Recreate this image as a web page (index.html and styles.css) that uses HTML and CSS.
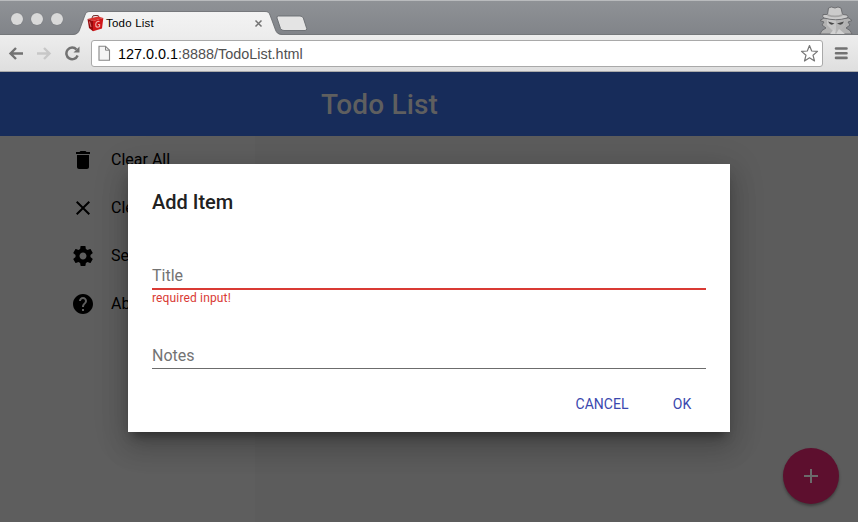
FILE: index.html
```html
<!DOCTYPE html>
<html lang="en">
<head>
<meta charset="utf-8">
<title>Todo List</title>
<link rel="stylesheet" href="styles.css">
</head>
<body>
<div class="browser">
  <div class="tabstrip">
    <div class="lights"><i></i><i></i><i></i></div>
    <div class="tab">
      <svg class="tab-shape" width="210" height="25" viewBox="0 0 210 25">
        <defs><linearGradient id="tabfill" x1="0" y1="0" x2="0" y2="1"><stop offset="0" stop-color="#f3f3f3"/><stop offset="1" stop-color="#ededed"/></linearGradient></defs>
        <path d="M0 25V24.500C4 24.500 5.500 22.500 6.500 20L12 5C13 2.500 14 1.500 17 1.500H192C195 1.500 196 2.500 197 5L202.500 20C203.500 22.500 205 24.500 209 24.500V25Z" fill="url(#tabfill)"/>
        <path d="M0 24.500C4 24.500 5.500 22.500 6.500 20L12 5C13 2.500 14 1.500 17 1.500H192C195 1.500 196 2.500 197 5L202.500 20C203.500 22.500 205 24.500 209 24.500" fill="none" stroke="#63666a" stroke-width=".8"/>
      </svg>
      <svg class="favicon" width="17" height="17" viewBox="0 0 17 17">
        <path d="M5 3L6 .8L11 .3L12 2" fill="none" stroke="#6d2524" stroke-width="1"/>
        <path d="M.5 4L11 1.500L16.300 3L6 6Z" fill="#d9302b"/>
        <path d="M.5 4L6 6V16.300L2 13Z" fill="#96090c"/>
        <path d="M6 6L16.300 3L15 13.500L6 16.300Z" fill="#cf1619"/>
        <path d="M2.500 6.500L4 12" stroke="#dc8580" stroke-width=".9"/>
        <path d="M12.500 6.500C10.500 5.700 8.800 7.200 8.700 9.600C8.600 12.500 11 12.700 12.600 11.500V9.500H11" fill="none" stroke="#f0a9a5" stroke-width="1.200"/>
      </svg>
      <span class="tab-title">Todo List</span>
      <svg class="close" width="9" height="9" viewBox="0 0 9 9"><path d="M1.500 1.500L7.500 7.500M7.500 1.500L1.500 7.500" stroke="#737373" stroke-width="1.500"/></svg>
    </div>
    <svg class="newtab" width="33" height="17" viewBox="0 0 33 17"><path d="M3.500 1H25Q27.500 1 28.300 3L31.700 13.500Q32 15.500 30 15.500H9Q6.500 15.500 5.500 13.500L2 3Q1.500 1 3.500 1Z" fill="#e4e4e4" stroke="#686b6f" stroke-width=".9"/></svg>
    <svg class="incognito" width="36" height="28" viewBox="0 0 36 28">
      <path d="M2 28Q3 24 8 22L4 19L6 16L2 14.500L6 12H31L34 14.500L30 16L32 19L28 22Q33 24 34 28Z" fill="#b2b2b2" stroke="#66686b" stroke-width=".9"/>
      <path d="M9 13H27V19L20 26H16L9 19Z" fill="#c6c6c6"/>
      <path d="M18 13H27V19L20 27L18 28Z" fill="#b5b5b5"/>
      <path d="M12 28L16 23L18 28ZM18 28L21 23L27 28Z" fill="#d2d2d2"/>
      <path d="M5 8.500Q4 11 6 12Q18 15.500 29 12Q31 11 29 9L24.500 8.500L23 2Q20 0 17 2Q13 0 10.500 2L9.500 8.500Z" fill="#cbcbcb" stroke="#66686b" stroke-width=".9"/>
      <path d="M9.500 8Q17 11 24.500 8V10Q17 12.500 9.500 10Z" fill="#a5a5a5"/>
      <path d="M10 15.500L16.500 17.500Q12.500 20.500 10 15.500M19 17.500L26 15.500Q24 20.500 19 17.500" fill="#484848"/>
    </svg>
  </div>
  <div class="toolbar">
    <svg class="nav" width="16" height="16" viewBox="0 0 16 16"><path d="M15 8.500H2.500M8 3L2.500 8.500L8 14" fill="none" stroke="#727272" stroke-width="2.400"/></svg>
    <svg class="nav" width="16" height="16" viewBox="0 0 16 16"><path d="M1 8.500H13.500M8 3L13.500 8.500L8 14" fill="none" stroke="#c7c7c7" stroke-width="2.400"/></svg>
    <svg class="nav" width="16" height="16" viewBox="0 0 16 16"><path d="M13.600 10.500A5.800 5.800 0 1 1 12.500 4.500" fill="none" stroke="#727272" stroke-width="2.500"/><path d="M15.500 1.500V7.500H9.500Z" fill="#727272"/></svg>
    <div class="address">
      <svg width="13" height="16" viewBox="0 0 13 16"><path d="M1 1.300H7.500L11.500 5.200V15.200H1Z" fill="#f4f4f4" stroke="#858585" stroke-width="1.100"/><path d="M7.500 1.500V5.200H11.500" fill="none" stroke="#858585"/></svg>
      <span class="url">127.0.0.1<span>:8888/TodoList.html</span></span>
      <svg class="star" width="20" height="20" viewBox="0 0 20 20"><path d="M10.500 2.500L12.700 8L18.500 8.400L14 12.200L15.500 18L10.500 14.800L5.500 18L7 12.200L2.500 8.400L8.300 8Z" fill="#fff" stroke="#777" stroke-width="1.200" stroke-linejoin="round"/></svg>
    </div>
    <svg class="menu" width="14" height="14" viewBox="0 0 14 14"><path d="M2 2.500H12.500M2 7.200H12.500M2 11.900H12.500" stroke="#727272" stroke-width="2.600" stroke-linecap="round"/></svg>
  </div>
</div>
<div class="app">
  <header><h1>Todo List</h1></header>
  <main>
    <nav class="drawer">
      <a><svg viewBox="0 0 24 24"><path d="M6 19c0 1.100.9 2 2 2h8c1.100 0 2-.9 2-2V7H6v12zM19 4h-3.500l-1-1h-5l-1 1H5v2h14V4z"/></svg><span>Clear All</span></a>
      <a><svg viewBox="0 0 24 24"><path d="M19 6.410L17.590 5 12 10.590 6.410 5 5 6.410 10.590 12 5 17.590 6.410 19 12 13.410 17.590 19 19 17.590 13.410 12z"/></svg><span>Clear Done</span></a>
      <a><svg viewBox="0 0 24 24"><path d="M19.430 12.980c.04-.32.07-.64.07-.98s-.03-.66-.07-.98l2.110-1.650c.19-.15.24-.42.12-.64l-2-3.460c-.12-.22-.39-.3-.61-.22l-2.490 1c-.52-.4-1.080-.73-1.690-.98l-.38-2.650C14.460 2.180 14.250 2 14 2h-4c-.25 0-.46.18-.49.42l-.38 2.650c-.61.25-1.170.59-1.690.98l-2.490-1c-.23-.09-.49 0-.61.22l-2 3.460c-.13.22-.07.49.12.64l2.110 1.650c-.04.32-.07.65-.07.98s.03.66.07.98l-2.110 1.650c-.19.15-.24.42-.12.64l2 3.460c.12.22.39.3.61.22l2.490-1c.52.4 1.080.73 1.690.98l.38 2.650c.03.24.24.42.49.42h4c.25 0 .46-.18.49-.42l.38-2.650c.61-.25 1.170-.59 1.690-.98l2.490 1c.23.09.49 0 .61-.22l2-3.460c.12-.22.07-.49-.12-.64l-2.110-1.650zM12 15.500c-1.930 0-3.500-1.570-3.500-3.500s1.570-3.500 3.500-3.500 3.500 1.570 3.500 3.500-1.570 3.500-3.500 3.500z"/></svg><span>Settings</span></a>
      <a><svg viewBox="0 0 24 24"><path d="M12 2C6.480 2 2 6.480 2 12s4.480 10 10 10 10-4.480 10-10S17.520 2 12 2zm1 17h-2v-2h2v2zm2.070-7.750l-.9.920C13.450 12.900 13 13.500 13 15h-2v-.5c0-1.100.45-2.100 1.170-2.830l1.240-1.260c.37-.36.59-.86.59-1.410 0-1.100-.9-2-2-2s-2 .9-2 2H8c0-2.210 1.790-4 4-4s4 1.790 4 4c0 .88-.36 1.680-.93 2.250z"/></svg><span>About</span></a>
    </nav>
  </main>
  <button class="fab"><svg width="24" height="24" viewBox="0 0 24 24"><path d="M19 13h-6v6h-2v-6H5v-2h6V5h2v6h6v2z" fill="#6b6b6b"/></svg></button>
  <section class="dialog">
    <h2>Add Item</h2>
    <div class="field invalid"><label>Title</label><p>required input!</p></div>
    <div class="field"><label>Notes</label></div>
    <div class="actions"><button>CANCEL</button><button>OK</button></div>
  </section>
</div>
</body>
</html>
```

FILE: styles.css
```css
* { box-sizing: border-box; }
body { margin: 0; width: 858px; height: 522px; overflow: hidden; font-family: Roboto, sans-serif; }
svg { display: block; flex: none; }
.browser { height: 72px; font-family: "Liberation Sans", sans-serif; }
.tabstrip { height: 35px; display: flex; align-items: flex-end; background: linear-gradient(#8f9296, #818489); border-top: 1px solid #b9bbbd; border-bottom: 1px solid #74777a; }
.lights { display: flex; gap: 8px; padding: 0 0 9px 11px; width: 73px; }
.lights i { width: 12px; height: 12px; border-radius: 50%; background: #d9d9d9; box-shadow: 0 0 1px #6c6f73; }
.tab { position: relative; width: 204px; height: 25px; display: flex; align-items: center; padding-left: 14px; margin-bottom: -1px; }
.tab-shape { position: absolute; left: 0; top: 0; }
.favicon, .tab-title, .close { position: relative; }
.favicon { margin-top: 2px; }
.tab-title { margin: 1px 0 0 2px; font-size: 11.5px; letter-spacing: .2px; color: #000; flex: 1; }
.close { margin: 2px 14px 0 0; }
.newtab { margin: 0 0 2px -2px; }
.incognito { margin-left: auto; margin-right: 4px; }
.toolbar { height: 37px; display: flex; align-items: center; padding: 0 9px 0 8px; background: linear-gradient(#ededed, #dfdfdf); border-bottom: 1px solid #aaa; }
.nav { margin-right: 12px; }
.nav:nth-child(3) { margin-right: 11px; }
.address { height: 27px; width: 732px; display: flex; align-items: center; padding: 0 3px 0 6px; background: #fff; border: 1px solid #a9a9a9; border-radius: 3px; }
.url { flex: 1; margin: 2px 0 0 7px; font-size: 14.4px; color: #000; }
.url span { color: #505050; }
.menu { margin-left: 11px; }
.app { position: relative; height: 450px; background: #5c5c5c; }
header { height: 64px; background: #172c5a; display: flex; align-items: center; padding-left: 321px; }
h1 { margin: 0; font-size: 28px; font-weight: 500; letter-spacing: .15px; color: #5f5f5f; }
main { height: 386px; }
.drawer { width: 255px; height: 386px; background: #5e5e5e; }
.drawer a { height: 48px; display: flex; align-items: center; gap: 16px; padding-left: 71px; font-size: 16px; color: #000; }
.drawer a span { margin-bottom: 2px; }
.drawer svg { width: 24px; height: 24px; }
button { border: 0; padding: 0; background: none; font: 500 14px Roboto, sans-serif; }
.fab { position: absolute; right: 19px; bottom: 18px; width: 56px; height: 56px; border-radius: 50%; background: #5d0f2e; display: grid; place-items: center; box-shadow: 0 2px 3px rgba(0,0,0,.35); }
.dialog { position: absolute; left: 128px; top: 92px; width: 602px; height: 268px; padding: 24px; background: #fff; box-shadow: 0 16px 24px 2px rgba(0,0,0,.14), 0 6px 30px 5px rgba(0,0,0,.12), 0 8px 10px -5px rgba(0,0,0,.4); }
h2 { margin: 0; font-size: 20px; line-height: 28px; font-weight: 500; color: #212121; }
.field { height: 80px; padding-top: 48px; }
.field label { display: block; height: 25px; line-height: 24px; border-bottom: 1px solid #6c6c6c; font-size: 16px; color: #737373; }
.field.invalid label { height: 26px; border-bottom: 2px solid #d93a34; }
.field p { margin: 0; font-size: 12px; line-height: 17px; letter-spacing: .15px; color: #d93a34; }
.actions { display: flex; justify-content: flex-end; margin-top: 10px; height: 36px; }
.actions button { height: 36px; color: #3a48ae; font-weight: 400; width: 78px; }
.actions button + button { width: 64px; margin-left: 9px; margin-right: -8px; }
```
